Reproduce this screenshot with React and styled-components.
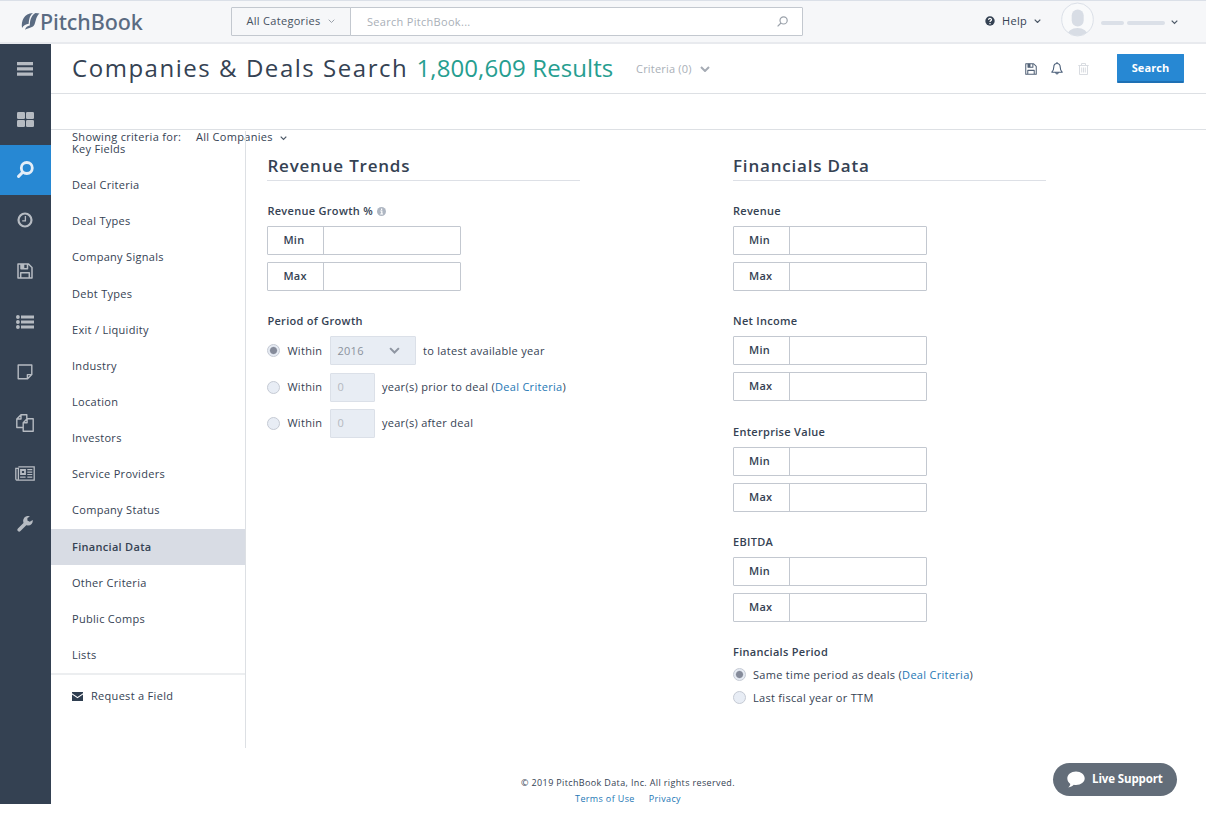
import React from "react";
import styled, { createGlobalStyle } from "styled-components";

const Global = createGlobalStyle`
  * { box-sizing: border-box; }
  body { margin: 0; background: #fff; color: #354253; font: 11px/14px "Open Sans", sans-serif; letter-spacing: 0.3px; }
  input { font: inherit; letter-spacing: inherit; color: inherit; }
  svg { display: block; flex: none; }
`;

const Page = styled.div`width: 1206px; height: 824px; position: relative; overflow: hidden;`;

/* top bar */
const TopBar = styled.header`
  height: 44px; display: flex; align-items: flex-start; background: #f6f7f9;
  border-top: 1px solid #dbe0e8; border-bottom: 2px solid #e8eaee;
`;
const Logo = styled.div`
  width: 231px; padding: 9px 0 0 21px; display: flex; color: #5a6b82;
  font: 500 21.5px/24px "Noto Sans", sans-serif; letter-spacing: -0.1px;
`;
const LogoMark = styled.svg`margin: 1px 0 0 0;`;
const CategoryBox = styled.div`
  width: 120px; height: 29px; margin-top: 6px; padding: 0 15px 1px 14.5px; display: flex; align-items: center; justify-content: space-between;
  border: 1px solid #c3c8cf; border-radius: 1px 0 0 1px; color: #46515f;
`;
const SearchBox = styled.div`
  width: 453px; height: 29px; margin: 6px 0 0 -1px; padding: 0 14px 0 16px; display: flex; align-items: center; justify-content: space-between;
  background: #fff; border: 1px solid #c3c8cf; border-radius: 0 1px 1px 0; color: #a9afb7;
`;
const HelpMenu = styled.div`margin: 13px 0 0 182px; display: flex; align-items: center; gap: 7px;`;
const Avatar = styled.svg`margin: 1px 0 0 20px;`;
const UserName = styled.div`margin: 20px 0 0 7px; display: flex; gap: 3px; align-items: center;`;
const Bar = styled.i`width: ${p => p.$w}px; height: 4px; border-radius: 2px; background: #dbe0e8;`;
const UserCaret = styled.div`margin: 19px 0 0 6px;`;

/* shell */
const Shell = styled.div`display: flex;`;
const Rail = styled.nav`width: 51px; height: 760px; flex: none; background: #344152; display: flex; flex-direction: column;`;
const RailItem = styled.div`
  height: 50.6px; display: flex; align-items: center; justify-content: center; color: ${p => (p.$active ? "#e4eef8" : "#b6bbc2")};
  padding-right: 1px; background: ${p => (p.$active ? "#2788d3" : "transparent")};
  &:first-child { height: 50px; }
`;
const Content = styled.div`flex: 1; min-width: 0;`;
const TitleRow = styled.div`height: 50px; padding: 0 22px 0 21px; display: flex; align-items: center; border-bottom: 1px solid #dde0e4;`;
const Title = styled.h1`margin: 0; padding-bottom: 2px; font-size: 24px; line-height: 30px; font-weight: 400; letter-spacing: 1.54px; white-space: nowrap; width: 344.5px;`;
const Results = styled.span`padding-bottom: 2px; font-size: 24px; line-height: 30px; letter-spacing: 0.1px; color: #269e90; white-space: nowrap; width: 219.5px;`;
const CriteriaCount = styled.div`display: flex; align-items: center; gap: 8px; color: #a9afb7; letter-spacing: 0.2px; padding-top: 1px;`;
const Actions = styled.div`margin-left: auto; display: flex; align-items: center; gap: 14.5px; color: #526277;`;
const SearchButton = styled.button`
  width: 67px; height: 29px; margin-left: 14px; padding: 0; background: #2788d3; color: #fff; border: 1px solid #2788d3; border-bottom: 2px solid #1e70b4;
  border-radius: 1px; font: 700 11px/14px "Open Sans", sans-serif; letter-spacing: 0.1px;
`;
const BlankRow = styled.div`height: 36px; border-bottom: 1px solid #dde0e4;`;
const ShowingRow = styled.div`height: 1px; padding-left: 21px; display: flex; align-items: flex-start; white-space: nowrap; line-height: 11px;`;
const ShowingLabel = styled.span`width: 124px; padding-top: 1px;`;
const ShowingValue = styled.span`padding-top: 1px;`;
const ShowingCaret = styled.span`padding: 6px 0 0 7px;`;

const Body = styled.div`display: flex;`;
const SideNav = styled.aside`width: 195px; height: 617px; flex: none; border-right: 1px solid #dde0e4;`;
const SideItem = styled.div`
  height: 36.15px; padding-left: 21px; display: flex; align-items: center; line-height: 12px;
  font-weight: ${p => (p.$active ? 600 : 400)}; background: ${p => (p.$active ? "#d8dce4" : "transparent")};
`;
const RequestField = styled.div`border-top: 2px solid #eceef0; padding: 14px 0 0 21px; display: flex; align-items: center; gap: 8px;`;
const Columns = styled.main`padding: 26px 0 0 21.4px; display: flex; gap: 153px;`;
const Column = styled.section`width: 312.6px;`;
const Heading = styled.h2`margin: 0 0 23px; height: 24px; border-bottom: 1px solid #dde0e6; font-size: 17px; line-height: 18px; font-weight: 600; letter-spacing: 0.8px;`;
const Group = styled.div`height: 110.3px;`;
const Label = styled.div`font-weight: 600; display: flex; align-items: center; gap: 4px; height: 14px; margin-bottom: ${p => p.$gap ?? 8}px;`;
const Range = styled.label`
  width: 194px; height: 29px; margin-bottom: 7.2px; display: flex; border: 1px solid #c3c8d0; border-radius: 1px; font-weight: 600;
`;
const RangeLabel = styled.span`width: 56px; padding: 6px 0 0 15px; border-right: 1px solid #c3c8d0;`;
const RangeInput = styled.input`flex: 1; min-width: 0; border: 0; padding: 0 6px; background: transparent; outline: 0;`;
const Period = styled.div`height: 29px; margin-bottom: 7.3px; display: flex; align-items: center; white-space: nowrap;`;
const Option = styled.div`height: 23px; display: flex; align-items: center; white-space: nowrap;`;
const Radio = styled.i`
  width: 13px; height: 13px; margin-right: 7px; border-radius: 50%; border: 1px solid #c5cad4; flex: none;
  background: ${p => (p.$on ? "radial-gradient(circle, #858b9a 0 3px, #e6ebf3 4.2px)" : "#e8edf5")};
`;
const Disabled = styled.span`
  width: ${p => p.$w}px; height: 29px; margin: 0 7px 0 7.6px; padding: 0 15px 0 6.500px; display: flex; align-items: center; justify-content: space-between;
  background: #e8edf4; border: 1px solid #dbe0e8; border-radius: 1px; color: ${p => p.$tone || "#b4b9c0"};
`;
const Link = styled.a`color: #2577b5;`;
const Footer = styled.footer`margin-top: 27px; padding-right: 1px; font-size: 9px; line-height: 16px; letter-spacing: 0.36px; text-align: center;`;
const FooterLinks = styled.div`display: flex; justify-content: center; gap: 14px;`;
const Support = styled.button`
  position: absolute; left: 1053px; top: 763px; width: 124px; height: 33px; border: 0; border-radius: 17px; padding: 0 0 1px 14px;
  display: flex; align-items: center; gap: 7px; background: #636d79; color: #fff; font: 700 11.5px/14px "Open Sans", sans-serif; letter-spacing: -0.12px; white-space: nowrap;
`;

const Caret = ({ s = 7, w = 1.2, color = "#4b5766" }) => (
  <svg width={s} height={s * 0.65} viewBox="0 0 10 6.5" fill="none" stroke={color} strokeWidth={(w * 10) / s}><path d="M1 1l4 4 4-4" /></svg>
);
const Floppy = ({ size, w = 1.5 }) => (
  <svg width={size} height={size} viewBox="0 0 16 16" fill="none" stroke="currentColor" strokeWidth={w} strokeLinejoin="round">
    <path d="M1 1h10.5L15 4.5V15H1zM3.7 15V9.8h8.6V15M4 1v4.7h6.5V1" /><path d="M4 1h3.300v4.500H4z" fill="currentColor" stroke="none" />
  </svg>
);
const icons = {
  menu: <svg width="16" height="14" viewBox="0 0 16 14" fill="currentColor"><path d="M0 0h16v3.300H0zM0 5.300h16v3.300H0zM0 10.500h16v3.300H0z" /></svg>,
  grid: <svg width="17" height="15" viewBox="0 0 17 15" fill="currentColor"><rect width="8" height="7" rx="1.3" /><rect x="9" width="8" height="7" rx="1.3" /><rect y="8" width="8" height="7" rx="1.3" /><rect x="9" y="8" width="8" height="7" rx="1.3" /></svg>,
  search: <svg width="17" height="17" viewBox="0 0 17 17" fill="none" stroke="currentColor" strokeWidth="2.8"><circle cx="9.8" cy="7" r="5.500" /><path d="M5.7 11.3L1.6 15.4" strokeLinecap="round" strokeWidth="3" /></svg>,
  clock: <svg width="16" height="16" viewBox="0 0 16 16" fill="none" stroke="currentColor" strokeWidth="2.2"><circle cx="8" cy="8" r="6.500" /><path d="M8.4 4v4.8H5.2" strokeWidth="1.3" /></svg>,
  save: <Floppy size={16} />,
  list: <svg width="18" height="14" viewBox="0 0 18 14" fill="currentColor"><circle cx="1.9" cy="2" r="1.9" /><circle cx="1.9" cy="7" r="1.9" /><circle cx="1.9" cy="12" r="1.9" /><path d="M5 .6h13v2.800H5zM5 5.600h13v2.800H5zM5 10.600h13v2.800H5z" /></svg>,
  note: <svg width="16" height="16" viewBox="0 0 16 16" fill="none" stroke="currentColor" strokeWidth="1.4" strokeLinejoin="round"><path d="M1.2 1h13.6v9.6l-4.2 4.2H1.2zM10.4 14.8v-4.2h4.4" /></svg>,
  files: <svg width="18" height="18" viewBox="0 0 18 18" fill="none" stroke="currentColor" strokeWidth="1.4" strokeLinejoin="round"><path d="M7 13.5H.8V5L5 .8h5.8v3.8M.8 5H5V.8M7.2 8.7l3.900-3.900h6.100v12.400h-10zM7.200 8.700h3.900V4.800" /></svg>,
  news: <svg width="20" height="15" viewBox="0 0 20 15" fill="none" stroke="currentColor" strokeWidth="1.3"><path d="M3.4.8h15.8v13.3H2.3Q.8 14.1.8 12.5V2.3h2.6v10.2q0 1.5-1.1 1.6" /><path d="M6 4h4v4H6z" strokeWidth="1.8" /><path d="M12.3 3.7h5M12.3 6.1h5M12.3 8.5h5M5.1 11.2h5.5M12.3 11.2h5" strokeWidth="1.2" /></svg>,
  wrench: <svg width="16" height="16" viewBox="0 0 16 16"><path d="M2.2 13.8L9 7" stroke="currentColor" strokeWidth="3.6" strokeLinecap="round" /><path d="M12.9.4A4.8 4.8 0 1 0 15.7 4L12.8 5.7 10.4 4.4V1.9z" fill="currentColor" /></svg>,
};
const Magnifier = () => <svg width="11" height="11" viewBox="0 0 11 11" fill="none" stroke="#9aa1aa" strokeWidth="1.2"><circle cx="6.6" cy="4.4" r="3.6" /><path d="M4 7L.6 10.4" /></svg>;
const Bell = () => <svg width="12" height="13" viewBox="0 0 12 13" fill="none" stroke="#4a5e78" strokeWidth="1.1" strokeLinejoin="round"><path d="M6 1.5c-2.2 0-3.2 1.6-3.2 3.5C2.8 7.8 2 9 .8 10.2h10.4C10 9 9.2 7.8 9.2 5c0-1.9-1-3.5-3.2-3.5zM6 0v1.5M4.8 10.7q.2 1.3 1.2 1.3t1.2-1.3" /></svg>;
const Trash = () => <svg width="11" height="12" viewBox="0 0 11 12" fill="none" stroke="#d9dce1"><path d="M.3 2.5h10.4M3.5 2.5v-2h4v2M1.5 2.5v9h8v-9M3.7 4.5v5M5.5 4.5v5M7.3 4.5v5" /></svg>;

const MinMax = ({ label, info }) => (
  <Group>
    <Label>{label}{info}</Label>
    {["Min", "Max"].map(t => <Range key={t}><RangeLabel>{t}</RangeLabel><RangeInput /></Range>)}
  </Group>
);

const sections = ["Key Fields", "Deal Criteria", "Deal Types", "Company Signals", "Debt Types", "Exit / Liquidity", "Industry", "Location", "Investors", "Service Providers", "Company Status", "Financial Data", "Other Criteria", "Public Comps", "Lists"];

export default function App() {
  return (
    <Page>
      <Global />
      <TopBar>
        <Logo>
          <LogoMark width="19" height="20" viewBox="0 0 19 20" fill="#5a6b82">
            <path d="M1 17C0 10 3 2.500 12 2 8.800 4.500 8 8 7.700 12.800 5 13.300 2.500 14.500 1 17z" />
            <path d="M4 18.800C4.800 15.800 6.500 15.300 8.800 14.500 9 9 10 4.800 14.500 2L18.500 2.400C15.300 5 15 9 13.600 13.200 12 17.200 8 16.300 4 18.800z" />
          </LogoMark>
          PitchBook
        </Logo>
        <CategoryBox>All Categories<Caret color="#9aa1aa" w={1} /></CategoryBox>
        <SearchBox>Search PitchBook...<Magnifier /></SearchBox>
        <HelpMenu>
          <svg width="10" height="10" viewBox="0 0 10 10"><circle cx="5" cy="5" r="4.700" fill="#354253" /><path d="M3.500 3.800Q3.700 2.400 5 2.400T6.500 3.700Q6.500 4.500 5.600 4.900 5 5.200 5 6M5 7v1.200" fill="none" stroke="#fff" strokeWidth="1.200" /></svg>
          Help<Caret />
        </HelpMenu>
        <Avatar width="33" height="35" viewBox="0 0 33 35">
          <defs><clipPath id="face"><ellipse cx="16.500" cy="17.500" rx="15.500" ry="16.300" /></clipPath></defs>
          <ellipse cx="16.500" cy="17.500" rx="15.800" ry="16.500" fill="#f9fafb" stroke="#dbe0e8" />
          <g clipPath="url(#face)" fill="#d8dde5"><rect x="10.700" y="7.500" width="12" height="17" rx="6" /><ellipse cx="16.500" cy="34" rx="10.500" ry="8" /></g>
        </Avatar>
        <UserName><Bar $w={23} /><Bar $w={38} /></UserName>
        <UserCaret><Caret /></UserCaret>
      </TopBar>
      <Shell>
        <Rail>{Object.keys(icons).map(k => <RailItem key={k} $active={k === "search"}>{icons[k]}</RailItem>)}</Rail>
        <Content>
          <TitleRow>
            <Title>Companies &amp; Deals Search</Title>
            <Results>1,800,609 Results</Results>
            <CriteriaCount>Criteria (0)<Caret s={10} w={2} color="#a5abb4" /></CriteriaCount>
            <Actions><Floppy size={12} w={1.4} /><Bell /><Trash /><SearchButton>Search</SearchButton></Actions>
          </TitleRow>
          <BlankRow />
          <ShowingRow><ShowingLabel>Showing criteria for:</ShowingLabel><ShowingValue>All Companies</ShowingValue><ShowingCaret><Caret /></ShowingCaret></ShowingRow>
          <Body>
            <SideNav>
              {sections.map(t => <SideItem key={t} $active={t === "Financial Data"}>{t}</SideItem>)}
              <RequestField>
                <svg width="11" height="9" viewBox="0 0 11 9" fill="#2f3e50"><path d="M0 0h11v1.200L5.500 5 0 1.200zM0 2.500l5.500 3.800L11 2.500V9H0z" /></svg>
                Request a Field
              </RequestField>
            </SideNav>
            <Columns>
              <Column>
                <Heading>Revenue Trends</Heading>
                <MinMax label="Revenue Growth %" info={<svg width="9" height="9" viewBox="0 0 9 9"><circle cx="4.500" cy="4.500" r="4.500" fill="#aeb6c2" /><path d="M4.600 1.500v1.400M3.300 4h1.500v3M3.200 7h2.800" stroke="#fff" strokeWidth="1.200" fill="none" /></svg>} />
                <Label>Period of Growth</Label>
                <Period><Radio $on />Within<Disabled $w={86} $tone="#8b929d">2016<Caret s={11} w={2} color="#8f96a2" /></Disabled>to latest available year</Period>
                <Period><Radio />Within<Disabled $w={45}>0</Disabled>year(s) prior to deal (<Link>Deal Criteria</Link>)</Period>
                <Period><Radio />Within<Disabled $w={45}>0</Disabled>year(s) after deal</Period>
              </Column>
              <Column>
                <Heading>Financials Data</Heading>
                {["Revenue", "Net Income", "Enterprise Value", "EBITDA"].map(t => <MinMax key={t} label={t} />)}
                <Label $gap={4}>Financials Period</Label>
                <Option><Radio $on />Same time period as deals (<Link>Deal Criteria</Link>)</Option>
                <Option><Radio />Last fiscal year or TTM</Option>
              </Column>
            </Columns>
          </Body>
          <Footer>© 2019 PitchBook Data, Inc. All rights reserved.<FooterLinks><Link>Terms of Use</Link><Link>Privacy</Link></FooterLinks></Footer>
        </Content>
      </Shell>
      <Support>
        <svg width="18" height="17" viewBox="0 0 18 17" fill="#fff"><path d="M9 .5c5 0 8.700 3 8.700 6.800S14 14 9 14c-.8 0-1.500-.1-2.200-.2C5.400 15.200 3.500 16.200 1.300 16.400c1-.9 1.800-2 2-3.500C1.500 11.600.3 9.600.3 7.300.3 3.500 4 .5 9 .5z" /></svg>
        Live Support
      </Support>
    </Page>
  );
}
